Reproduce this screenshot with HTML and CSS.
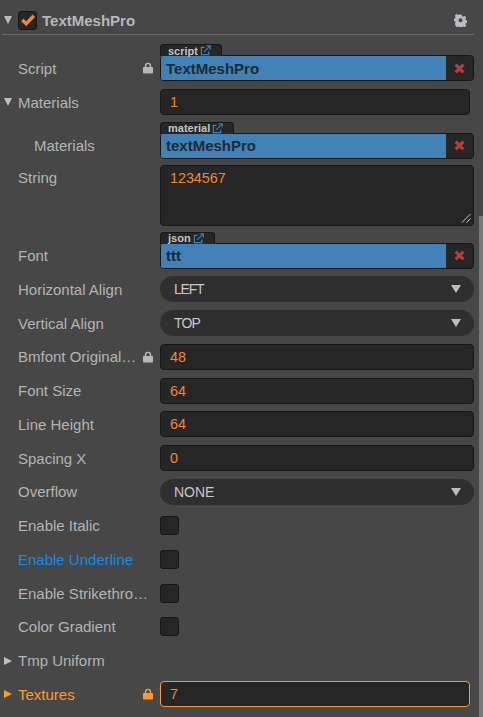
FILE: index.html
```html
<!DOCTYPE html>
<html lang="en">
<head>
<meta charset="utf-8">
<title>TextMeshPro</title>
<link rel="stylesheet" href="styles.css">
</head>
<body>
<svg class="defs" width="0" height="0" aria-hidden="true">
  <symbol id="lock" viewBox="0 0 11 12"><path d="M2 5V3.6a3.5 3.5 0 0 1 7 0V5h1.2a.8.8 0 0 1 .8.8v5.4a.8.8 0 0 1-.8.8H.8a.8.8 0 0 1-.8-.8V5.800a.8.8 0 0 1 .8-.8zm1.600 0h3.800V3.600a1.900 1.900 0 0 0-3.800 0z" fill="currentColor"/></symbol>
  <symbol id="ext" viewBox="0 0 12 12"><path d="M9.500 7v3.500h-8v-8H5" fill="none" stroke="currentColor" stroke-width="1.300"/><path d="M4.500 7.500 10.500 1.500M7 .8h4.200V5" fill="none" stroke="currentColor" stroke-width="1.300"/></symbol>
  <symbol id="cross" viewBox="0 0 11 11"><path d="M1.600 1.600 9.400 9.400M9.400 1.600 1.600 9.400" fill="none" stroke="currentColor" stroke-width="3.200"/></symbol>
</svg>
<main class="panel">
  <header class="head">
    <span class="tri tri-down tri-head"></span>
    <span class="box box-on"><svg class="check" viewBox="0 0 14 12"><path d="M1.300 6 5.200 9.700 12.800 1.800" fill="none" stroke="#f7862a" stroke-width="3.400"/></svg></span>
    <span class="title">TextMeshPro</span>
    <svg class="gear" viewBox="0 0 14 14"><path fill-rule="evenodd" d="M5.700.5h2.600l.4 1.900 1 .5 1.700-1 1.800 1.900-1 1.600.4 1.100 1.900.4v2.600l-1.900.4-.4 1 1 1.700-1.800 1.800-1.700-1-1 .4-.4 1.900H5.700l-.4-1.900-1-.4-1.700 1L.8 10.700l1-1.700-.4-1-1.900-.4V5l1.900-.4.400-1.100-1-1.600L2.600 0l1.700 1 1-.5zM7 4.600a2.200 2.200 0 1 0 0 4.400 2.200 2.200 0 0 0 0-4.400z" fill="#b9bdc1"/></svg>
  </header>
  <div class="rows">
    <div class="row">
      <span class="label">Script</span><svg class="lock"><use href="#lock"/></svg>
      <div class="asset"><span class="tag">script<svg class="ext"><use href="#ext"/></svg></span><span class="asset-name">TextMeshPro</span><span class="clear"><svg class="x"><use href="#cross"/></svg></span></div>
    </div>
    <div class="row row-short">
      <span class="tri tri-down"></span><span class="label">Materials</span>
      <div class="input">1</div>
    </div>
    <div class="row row-child">
      <span class="label">Materials</span>
      <div class="asset"><span class="tag">material<svg class="ext"><use href="#ext"/></svg></span><span class="asset-name">textMeshPro</span><span class="clear"><svg class="x"><use href="#cross"/></svg></span></div>
    </div>
    <div class="row row-area">
      <span class="label label-top">String</span>
      <div class="textarea">1234567<svg class="grip" viewBox="0 0 10 10"><path d="M1 9.500 9.500 1M5.500 9.500 9.500 5.500" stroke="#c8c8c8" stroke-width="1" fill="none"/></svg></div>
    </div>
    <div class="row row-font">
      <span class="label">Font</span>
      <div class="asset"><span class="tag">json<svg class="ext"><use href="#ext"/></svg></span><span class="asset-name">ttt</span><span class="clear"><svg class="x"><use href="#cross"/></svg></span></div>
    </div>
    <div class="row"><span class="label">Horizontal Align</span><div class="select"><span class="narrow">LEFT</span><span class="caret"></span></div></div>
    <div class="row"><span class="label">Vertical Align</span><div class="select"><span class="narrow-less">TOP</span><span class="caret"></span></div></div>
    <div class="row"><span class="label">Bmfont Original…</span><svg class="lock"><use href="#lock"/></svg><div class="input">48</div></div>
    <div class="row"><span class="label">Font Size</span><div class="input">64</div></div>
    <div class="row"><span class="label">Line Height</span><div class="input">64</div></div>
    <div class="row"><span class="label">Spacing X</span><div class="input">0</div></div>
    <div class="row"><span class="label">Overflow</span><div class="select">NONE<span class="caret"></span></div></div>
    <div class="row"><span class="label">Enable Italic</span><span class="box"></span></div>
    <div class="row"><span class="label label-blue">Enable Underline</span><span class="box"></span></div>
    <div class="row"><span class="label">Enable Strikethro…</span><span class="box"></span></div>
    <div class="row"><span class="label">Color Gradient</span><span class="box"></span></div>
    <div class="row"><span class="tri tri-right"></span><span class="label">Tmp Uniform</span></div>
    <div class="row row-short row-active">
      <span class="tri tri-right"></span><span class="label">Textures</span><svg class="lock"><use href="#lock"/></svg>
      <div class="input input-active">7</div>
    </div>
  </div>
</main>
<div class="scrollbar"></div>
</body>
</html>
```
FILE: styles.css
```css
* { box-sizing: border-box; }
html, body { margin: 0; height: 100%; }
body {
  width: 483px;
  height: 717px;
  overflow: hidden;
  position: relative;
  background: #474747;
  font-family: "Liberation Sans", Arial, sans-serif;
  font-size: 14px;
  color: #b4b4b4;
}
.defs { position: absolute; }
.panel { padding: 11px 9px 0 2px; }
.head {
  display: flex;
  align-items: center;
  height: 24px;
  padding: 0 6px 5px 2px;
  border-bottom: 1px solid #666;
}
.title { font-weight: bold; font-size: 15px; color: #b8b8b8; margin-left: 5px; }
.gear { width: 13px; height: 13px; margin-left: auto; margin-right: 1px; }
.rows { display: flex; flex-direction: column; gap: 7.75px; padding-top: 20.4px; }
.row {
  position: relative;
  display: flex;
  align-items: center;
  height: 26px;
  padding-left: 16px;
}
.row-short { margin-right: 4px; }
.row-child { margin-top: 9.7px; padding-left: 32px; }
.row-area { height: 61px; align-items: flex-start; margin-top: -1.1px; }
.row-font { margin-top: 8.6px; }
.row-active .label, .row-active .lock { color: #ff9a2e; }
.label { white-space: nowrap; font-size: 15px; }
.label-top { padding-top: 4px; }
.label-blue { color: #0f8cf0; }
.tri { position: absolute; left: 2px; width: 0; height: 0; border-style: solid; }
.tri-down { border-width: 8px 4px 0; border-color: #bdbdbd transparent transparent; }
.tri-right { border-width: 4px 0 4px 8px; border-color: transparent transparent transparent #bdbdbd; }
.row-active .tri-right { border-left-color: #ff9a2e; }
.tri-head { position: static; margin-right: 6px; flex: none; }
.box {
  display: flex;
  align-items: center;
  justify-content: center;
  width: 19px;
  height: 19px;
  background: #262626;
  border: 1px solid #171717;
  border-radius: 3px;
  position: absolute;
  left: 158px;
}
.box-on { position: static; flex: none; }
.check { width: 14px; height: 12px; }
.lock { position: absolute; left: 141px; width: 10px; height: 12px; color: #b8b8b8; }
.input, .asset, .select, .textarea {
  position: absolute;
  left: 158px;
  right: 0;
  height: 26px;
}
.input {
  display: flex;
  align-items: center;
  padding-left: 9px;
  background: #262626;
  border: 1px solid #171717;
  border-radius: 4px;
  color: #f7862a;
  font-size: 14.3px;
}
.input-active { border-color: #ff9a2e; }
.textarea {
  height: 61px;
  padding: 4px 9px;
  background: #262626;
  border: 1px solid #171717;
  border-radius: 4px;
  color: #f7862a;
  font-size: 14.3px;
}
.grip { position: absolute; right: 2px; bottom: 2px; width: 10px; height: 10px; }
.asset {
  display: flex;
  background: #262626;
  border: 1px solid #171717;
  border-radius: 4px;
}
.asset-name {
  flex: 1;
  display: flex;
  align-items: center;
  padding-left: 5px;
  background: #4281b6;
  color: #1f2a33;
  font-weight: bold;
  font-size: 15px;
  border-radius: 2px 0 0 2px;
}
.clear { width: 27px; display: flex; align-items: center; justify-content: center; }
.x { width: 11px; height: 11px; color: #b83c3c; }
.tag {
  position: absolute;
  left: -1px;
  bottom: 100%;
  display: flex;
  align-items: center;
  gap: 2px;
  height: 12px;
  padding: 0 10px 0 7px;
  background: #262626;
  border: 1px solid #171717;
  border-bottom: 0;
  border-radius: 4px 4px 0 0;
  color: #c4c4c4;
  font-size: 11px;
  font-weight: bold;
}
.ext { width: 11px; height: 11px; color: #3f83bd; }
.select {
  display: flex;
  align-items: center;
  justify-content: space-between;
  padding: 0 13px 0 14px;
  background: #2f2f2f;
  border-radius: 13px;
  color: #c8c8c8;
}
.narrow { letter-spacing: -1.2px; }
.narrow-less { letter-spacing: -.8px; }
.caret {
  width: 0;
  height: 0;
  border-style: solid;
  border-width: 8px 5px 0;
  border-color: #bdbdbd transparent transparent;
}
.scrollbar {
  position: absolute;
  left: 479px;
  top: 216px;
  bottom: 0;
  width: 4px;
  background: #787878;
}
```
